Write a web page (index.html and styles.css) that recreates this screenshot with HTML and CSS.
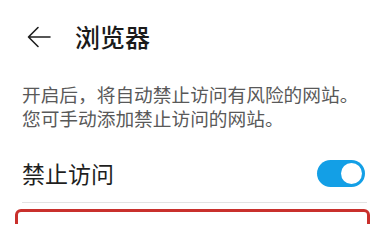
FILE: index.html
```html
<!DOCTYPE html>
<html lang="zh-CN">
<head>
<meta charset="utf-8">
<link rel="stylesheet" href="styles.css">
</head>
<body>
<div class="page">
  <header class="header">
    <svg class="back" width="24" height="22" viewBox="0 0 24 22" aria-hidden="true">
      <path d="M23 11H2M11 1.5L1.5 11L11 20.5" fill="none" stroke="#1f1f1f" stroke-width="1.6" stroke-linecap="round" stroke-linejoin="round"/>
    </svg>
    <h1 class="title">浏览器</h1>
  </header>
  <p class="desc">开启后，将自动禁止访问有风险的网站。<br>您可手动添加禁止访问的网站。</p>
  <div class="section">
    <div class="row">
      <span class="row-label">禁止访问</span>
      <span class="switch"><span class="knob"></span></span>
    </div>
    <div class="divider"></div>
  </div>
  <div class="highlight"></div>
</div>
</body>
</html>
```

FILE: styles.css
```css
html, body {
  margin: 0;
  padding: 0;
  background: #ffffff;
}
body {
  font-family: "Noto Sans CJK SC", "Noto Sans", sans-serif;
  width: 385px;
  height: 224px;
  overflow: hidden;
}
.page {
  display: flex;
  flex-direction: column;
}
.header {
  display: flex;
  align-items: center;
  height: 50px;
  padding-top: 11px;
}
.back {
  margin-left: 27px;
  flex: none;
  margin-top: 2px;
}
.title {
  margin: 0 0 0 24px;
  font-size: 25px;
  font-weight: 500;
  color: #1a1a1a;
  line-height: 30px;
}
.desc {
  margin: 21px 0 0 22px;
  font-size: 18.7px;
  line-height: 24px;
  color: #595959;
  text-spacing-trim: space-all;
}
.section {
  margin: 18px 18px 0 22px;
}
.row {
  display: flex;
  align-items: center;
  justify-content: space-between;
  height: 50px;
}
.row-label {
  font-size: 23px;
  color: #1f1f1f;
}
.switch {
  position: relative;
  width: 48px;
  height: 27px;
  border-radius: 14px;
  background: #139fe6;
  margin-right: 2px;
}
.knob {
  position: absolute;
  right: 3px;
  top: 3px;
  width: 21px;
  height: 21px;
  border-radius: 50%;
  background: #ffffff;
}
.divider {
  margin-top: 4px;
  height: 1px;
  background: #e3e3e3;
}
.highlight {
  margin: 6px 15px 0 15px;
  height: 60px;
  border: 3px solid #c9302c;
  border-radius: 6px;
}
```
